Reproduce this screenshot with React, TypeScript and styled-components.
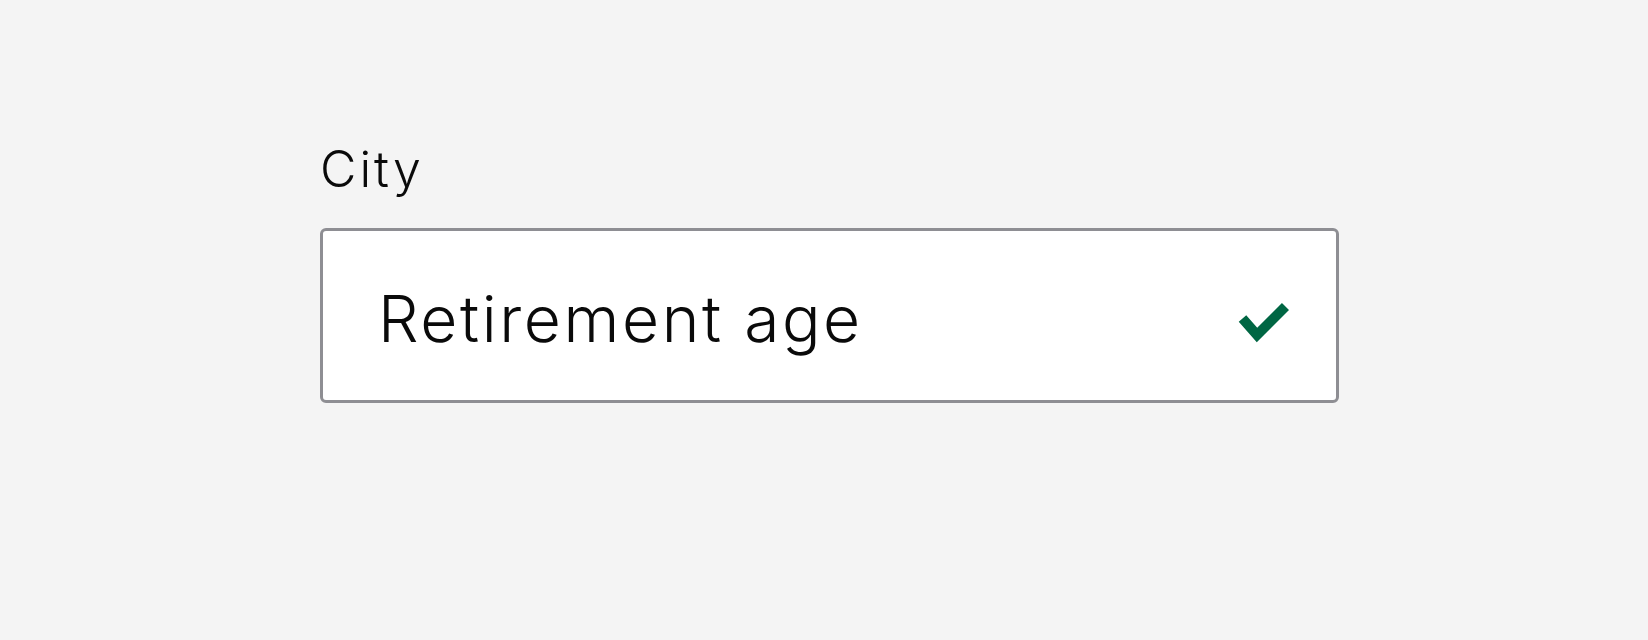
import React, { FC } from 'react'
import styled, { createGlobalStyle } from 'styled-components'

const GlobalStyle = createGlobalStyle`
    html, body {
        margin: 0;
        padding: 0;
        background: #f4f4f4;
        font-family: Inter, "Noto Sans", "Liberation Sans", sans-serif;
    }
`;

const Page = styled.div`
    width: 1648px;
    height: 640px;
    box-sizing: border-box;
    padding: 144px 0 0 320px;
    background: #f4f4f4;
`;

const Field = styled.div`
    display: flex;
    flex-direction: column;
    gap: 34px;
    width: 1019px;
`;

const Label = styled.label`
    font-size: 50px;
    font-weight: 350;
    line-height: 50px;
    letter-spacing: 3px;
    color: #0a0a0a;
`;

const InputBox = styled.div`
    display: flex;
    align-items: center;
    justify-content: space-between;
    height: 175px;
    box-sizing: border-box;
    padding: 0 47px 0 55px;
    background: #fff;
    border: 3px solid #8e8e93;
    border-radius: 6px;
`;

const Value = styled.span`
    font-size: 64px;
    font-weight: 350;
    letter-spacing: 2.6px;
    line-height: 1;
    color: #0a0a0a;
    margin-top: 6px;
`;

const CheckIcon = styled.svg`
    flex: none;
    margin-top: 10px;
`;

const Check: FC<{ color: string }> = ({ color }) => (
    <CheckIcon width="52" height="44" viewBox="0 0 52 44">
        <polyline
            points="5.5,19.5 20,36 48.5,7.5"
            fill="none"
            stroke={color}
            strokeWidth="10"
            strokeLinejoin="miter"
            strokeLinecap="butt"
        />
    </CheckIcon>
)

const App: FC = () => {
    return (
        <>
            <GlobalStyle />
            <Page>
                <Field>
                    <Label>City</Label>
                    <InputBox>
                        <Value>Retirement age</Value>
                        <Check color="#006643" />
                    </InputBox>
                </Field>
            </Page>
        </>
    )
}

export default App
